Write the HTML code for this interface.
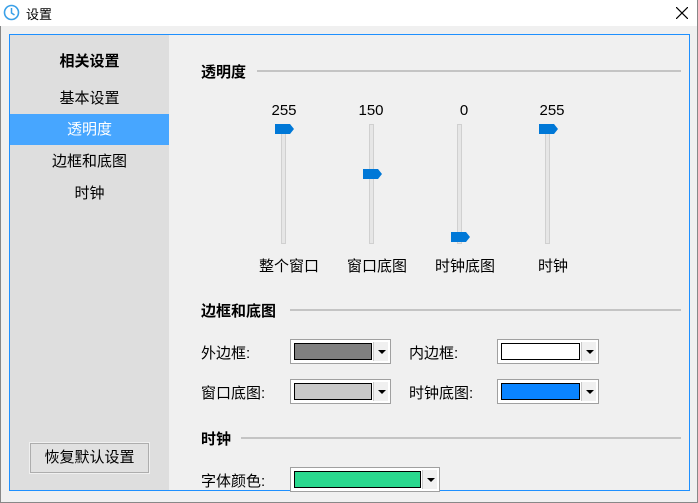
<!DOCTYPE html>
<html><head><meta charset="utf-8"><style>
*{margin:0;padding:0;box-sizing:border-box}
body{width:698px;height:503px;background:#f0f0f0;position:relative;overflow:hidden;font-family:"Liberation Sans","Noto Sans CJK SC",sans-serif;font-size:15px;color:#000}
.a{position:absolute}
.title{left:0;top:0;width:698px;height:26px;background:#fff}
.frame{left:9px;top:34px;width:681px;height:457px;border:1px solid #1e90ff}
.side{left:10px;top:35px;width:159px;height:455px;background:#dedede}
.si{left:10px;width:159px;text-align:center;height:31px;line-height:31px}
.hdr{font-weight:bold;font-size:15px}
.line{height:2px;background:#c4c4c4}
.track{width:5px;height:120px;background:#e6e6e6;border:1px solid #d0d0d0}
.thumb{width:19px;height:10px}
.combo{height:25px;border:1px solid #a0a0a0;background:#fff;box-shadow:inset 1px 1px 0 #fff}
.sw{position:absolute;left:3px;top:3px;bottom:3px;right:18px;border:1px solid #000}
.dd{position:absolute;right:2px;top:2px;bottom:2px;width:15px;background:#f0f0f0;border-left:1px solid #c8c8c8}
.dd:after{content:"";position:absolute;left:4px;top:8px;border-left:4px solid transparent;border-right:4px solid transparent;border-top:4px solid #000}
</style></head><body>
<div class="a title"></div>
<svg class="a" style="left:3px;top:4px" width="17" height="17" viewBox="0 0 17 17"><circle cx="8.5" cy="8.5" r="7" fill="none" stroke="#3aa0e8" stroke-width="1.6"/><path d="M8.5 4v5l3 2" fill="none" stroke="#3aa0e8" stroke-width="1.5"/></svg>
<div class="a" style="left:26px;top:4px;font-size:13px">设置</div>
<svg class="a" style="left:676px;top:7px" width="12" height="12"><path d="M0 0L12 12M12 0L0 12" stroke="#000" stroke-width="1.2"/></svg>
<div class="a" style="left:697px;top:0;width:1px;height:503px;background:#888"></div>
<div class="a" style="left:0;top:502px;width:698px;height:1px;background:#888"></div>
<div class="a" style="left:0;top:26px;width:1px;height:477px;background:#888"></div>
<div class="a frame"></div>
<div class="a side"></div>
<div class="a si hdr" style="top:46px">相关设置</div>
<div class="a si" style="top:83px">基本设置</div>
<div class="a si" style="top:114px;background:#47a6ff;color:#fff">透明度</div>
<div class="a si" style="top:146px">边框和底图</div>
<div class="a si" style="top:178px">时钟</div>
<div class="a" style="left:30px;top:443px;width:119px;height:30px;border:1px solid #adadad;background:#e1e1e1;box-shadow:0 0 0 1px #f0f0f0;text-align:center;line-height:28px">恢复默认设置</div>

<div class="a hdr" style="left:201px;top:61px">透明度</div>
<div class="a line" style="left:257px;top:70px;width:424px"></div>
<div class="a hdr" style="left:201px;top:300px">边框和底图</div>
<div class="a line" style="left:290px;top:309px;width:391px"></div>
<div class="a hdr" style="left:201px;top:428px">时钟</div>
<div class="a line" style="left:241px;top:437px;width:440px"></div>

<div class="a" style="left:264px;top:102px;width:40px;text-align:center">255</div>
<div class="a" style="left:351px;top:102px;width:40px;text-align:center">150</div>
<div class="a" style="left:444px;top:102px;width:40px;text-align:center">0</div>
<div class="a" style="left:532px;top:102px;width:40px;text-align:center">255</div>
<div class="a track" style="left:281px;top:124px"></div>
<div class="a track" style="left:369px;top:124px"></div>
<div class="a track" style="left:457px;top:124px"></div>
<div class="a track" style="left:545px;top:124px"></div>
<svg class="a thumb" style="left:275px;top:124px"><path d="M0 0H15L19 5L15 10H0Z" fill="#0078d7"/></svg>
<svg class="a thumb" style="left:363px;top:169px"><path d="M0 0H15L19 5L15 10H0Z" fill="#0078d7"/></svg>
<svg class="a thumb" style="left:451px;top:232px"><path d="M0 0H15L19 5L15 10H0Z" fill="#0078d7"/></svg>
<svg class="a thumb" style="left:539px;top:124px"><path d="M0 0H15L19 5L15 10H0Z" fill="#0078d7"/></svg>
<div class="a" style="left:249px;top:255px;width:80px;text-align:center">整个窗口</div>
<div class="a" style="left:337px;top:255px;width:80px;text-align:center">窗口底图</div>
<div class="a" style="left:425px;top:255px;width:80px;text-align:center">时钟底图</div>
<div class="a" style="left:513px;top:255px;width:80px;text-align:center">时钟</div>

<div class="a" style="left:201px;top:342px">外边框:</div>
<div class="a combo" style="left:290px;top:339px;width:101px"><div class="sw" style="background:#808080"></div><div class="dd"></div></div>
<div class="a" style="left:409px;top:342px">内边框:</div>
<div class="a combo" style="left:497px;top:339px;width:102px"><div class="sw" style="background:#fff"></div><div class="dd"></div></div>
<div class="a" style="left:201px;top:382px">窗口底图:</div>
<div class="a combo" style="left:290px;top:379px;width:101px"><div class="sw" style="background:#c8c8c8"></div><div class="dd"></div></div>
<div class="a" style="left:409px;top:382px">时钟底图:</div>
<div class="a combo" style="left:497px;top:379px;width:102px"><div class="sw" style="background:#0a84ff"></div><div class="dd"></div></div>
<div class="a" style="left:201px;top:470px">字体颜色:</div>
<div class="a combo" style="left:290px;top:467px;width:150px"><div class="sw" style="background:#2ad88e"></div><div class="dd"></div></div>
</body></html>
